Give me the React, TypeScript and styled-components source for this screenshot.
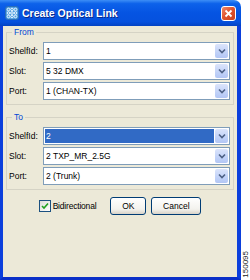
import React from 'react'
import styled, { createGlobalStyle } from 'styled-components'

const GlobalStyle = createGlobalStyle`
  html, body {
    margin: 0;
    padding: 0;
    background: #fff;
  }
  body {
    font-family: "Liberation Sans", Arial, sans-serif;
  }
`

const Page = styled.div`
  display: flex;
  width: 250px;
  height: 280px;
  overflow: hidden;
`

const Window = styled.div`
  width: 241px;
  display: flex;
  flex-direction: column;
`

const TitleBar = styled.div`
  height: 26px;
  flex: none;
  display: flex;
  align-items: center;
  gap: 3px;
  padding: 0 5px 0 5px;
  border-top-right-radius: 7px;
  background: linear-gradient(#3d8ef6 0%, #0d62ea 14%, #0554e2 50%, #0551de 84%, #0342c2 100%);
`

const Title = styled.span`
  flex: 1;
  font-size: 10.5px;
  font-weight: bold;
  color: #fff;
  text-shadow: 1px 1px #0a2a8a;
  white-space: nowrap;
`

const CloseButton = styled.div`
  width: 15px;
  height: 15px;
  box-sizing: border-box;
  border: 1px solid #fff;
  border-radius: 3px;
  background: linear-gradient(135deg, #f08a6c 0%, #e1552f 45%, #c9401d 100%);
  display: flex;
  align-items: center;
  justify-content: center;
`

const Body = styled.div`
  flex: 1;
  display: flex;
  flex-direction: column;
  padding: 0 3px;
  background: #ece9d8;
  border-left: 3px solid #0b3fdc;
  border-right: 4px solid #0b3fdc;
  border-bottom: 3px solid #0a2fc8;
`

const Group = styled.fieldset<{ $gapTop?: number }>`
  margin: ${p => p.$gapTop ?? 0}px 0 0 0;
  padding: 4px 3px 4px 2px;
  border: 1px solid #d5d3c5;
  min-width: 0;
`

const Legend = styled.legend`
  font-size: 8.5px;
  line-height: 12px;
  color: #0046d5;
  padding: 0 2px;
  margin-left: 3px;
`

const Rows = styled.div`
  display: flex;
  flex-direction: column;
  gap: 2px;
`

const Row = styled.div`
  display: flex;
  align-items: center;
  height: 18px;
`

const Label = styled.span`
  width: 34px;
  flex: none;
  font-size: 8.5px;
  color: #000;
`

const Combo = styled.div`
  flex: 1;
  height: 18px;
  box-sizing: border-box;
  display: flex;
  border: 1px solid #7f9db9;
  background: #fff;
`

const ComboValue = styled.span<{ $selected?: boolean }>`
  flex: 1;
  display: flex;
  align-items: center;
  margin: 1px;
  padding-left: 1px;
  font-size: 8.5px;
  color: ${p => (p.$selected ? '#fff' : '#000')};
  background: ${p => (p.$selected ? '#316ac5' : 'transparent')};
`

const ArrowButton = styled.span`
  width: 13px;
  flex: none;
  margin: 1px 1px 1px 0;
  border-radius: 2px;
  display: flex;
  align-items: center;
  justify-content: center;
  background: linear-gradient(#dbe4fb, #c1d2f8 60%, #b2c6f4);
`

const Footer = styled.div`
  display: flex;
  align-items: center;
  justify-content: center;
  margin-top: 7px;
`

const CheckLabel = styled.label`
  display: flex;
  align-items: center;
  gap: 2px;
  font-size: 8.5px;
  letter-spacing: -0.2px;
  margin-right: 9px;
`

const CheckBox = styled.span`
  width: 12px;
  height: 12px;
  box-sizing: border-box;
  border: 1px solid #1c5180;
  background: linear-gradient(135deg, #dcdcd7, #fff);
  display: flex;
  align-items: center;
  justify-content: center;
`

const Button = styled.button<{ $width: number }>`
  width: ${p => p.$width}px;
  height: 18px;
  padding: 0;
  margin-left: 5px;
  font-family: "Liberation Sans", Arial, sans-serif;
  font-size: 8.5px;
  color: #000;
  border: 1px solid #003c74;
  border-radius: 3px;
  background: linear-gradient(#ffffff, #f3f2ed 70%, #d8d3c8);
`

const Side = styled.div`
  flex: 1;
  display: flex;
  align-items: flex-end;
  justify-content: center;
  padding-bottom: 2px;
`

const Stamp = styled.span`
  writing-mode: vertical-rl;
  transform: rotate(180deg);
  font-size: 8px;
  line-height: 8px;
  color: #222;
`

const Chevron = () => (
  <svg width="8" height="6" viewBox="0 0 8 6">
    <polyline points="1,1.5 4,4.5 7,1.5" fill="none" stroke="#4d6185" strokeWidth="1.6" />
  </svg>
)

const AppIcon = () => (
  <svg width="14" height="14" viewBox="0 0 14 14">
    <rect x="0.5" y="0.5" width="13" height="13" rx="2.5" fill="#4f9ee0" stroke="#2c6fb8" />
    {[3.5, 7, 10.5].map(y =>
      [3.5, 7, 10.5].map(x => (
        <circle key={`${x}-${y}`} cx={x} cy={y} r="1.3" fill="none" stroke="#e8f6ff" strokeWidth="1" />
      ))
    )}
  </svg>
)

type Field = { label: string; value: string; selected?: boolean }

const from: Field[] = [
  { label: 'ShelfId:', value: '1' },
  { label: 'Slot:', value: '5 32 DMX' },
  { label: 'Port:', value: '1 (CHAN-TX)' },
]

const to: Field[] = [
  { label: 'ShelfId:', value: '2', selected: true },
  { label: 'Slot:', value: '2 TXP_MR_2.5G' },
  { label: 'Port:', value: '2 (Trunk)' },
]

const FieldGroup = ({ title, fields, gapTop }: { title: string; fields: Field[]; gapTop?: number }) => (
  <Group $gapTop={gapTop}>
    <Legend>{title}</Legend>
    <Rows>
      {fields.map(f => (
        <Row key={f.label}>
          <Label>{f.label}</Label>
          <Combo>
            <ComboValue $selected={f.selected}>{f.value}</ComboValue>
            <ArrowButton>
              <Chevron />
            </ArrowButton>
          </Combo>
        </Row>
      ))}
    </Rows>
  </Group>
)

export default function App() {
  return (
    <>
      <GlobalStyle />
      <Page>
        <Window>
          <TitleBar>
            <AppIcon />
            <Title>Create Optical Link</Title>
            <CloseButton>
              <svg width="9" height="9" viewBox="0 0 9 9">
                <path d="M1.5 1.5 L7.5 7.5 M7.5 1.5 L1.5 7.5" stroke="#fff" strokeWidth="1.8" />
              </svg>
            </CloseButton>
          </TitleBar>
          <Body>
            <FieldGroup title="From" fields={from} />
            <FieldGroup title="To" fields={to} gapTop={6} />
            <Footer>
              <CheckLabel>
                <CheckBox>
                  <svg width="8" height="8" viewBox="0 0 8 8">
                    <polyline points="1,4 3,6 7,1.5" fill="none" stroke="#21a121" strokeWidth="1.6" />
                  </svg>
                </CheckBox>
                Bidirectional
              </CheckLabel>
              <Button $width={36}>OK</Button>
              <Button $width={50}>Cancel</Button>
            </Footer>
          </Body>
        </Window>
        <Side>
          <Stamp>150095</Stamp>
        </Side>
      </Page>
    </>
  )
}
